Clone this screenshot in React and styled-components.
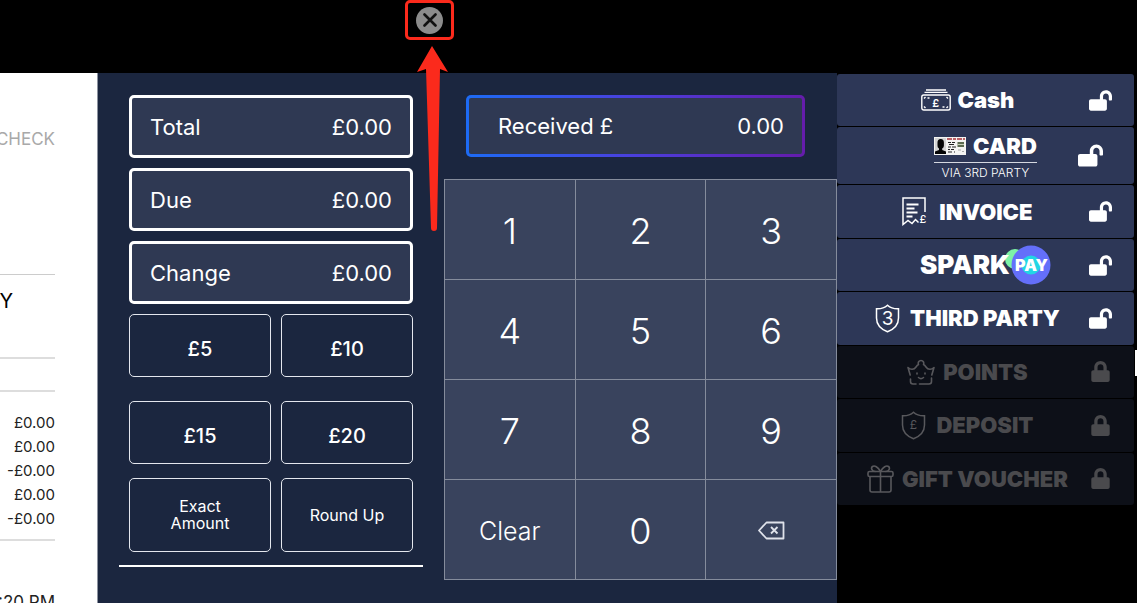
import React from "react";
import styled, { createGlobalStyle } from "styled-components";
import { FaLock, FaLockOpen } from "react-icons/fa";

const navy = "#1b263f";
const boxColor = "#2f3953";
const rowColor = "#2d3757";
const keyColor = "#39435d";
const red = "#fb2a1c";

const GlobalStyle = createGlobalStyle`
  * {
    box-sizing: border-box;
  }
  body {
    margin: 0;
    background: #000;
    font-family: "Inter", "Open Sans", sans-serif;
  }
  button, input {
    font: inherit;
    color: inherit;
  }
  button {
    cursor: pointer;
  }
`;

const totals = [
  { label: "Total", value: "£0.00" },
  { label: "Due", value: "£0.00" },
  { label: "Change", value: "£0.00" },
];

const receiptLines = ["£0.00", "£0.00", "-£0.00", "£0.00", "-£0.00"];

const digits = ["1", "2", "3", "4", "5", "6", "7", "8", "9"];

function CashIcon() {
  return (
    <svg width="30" height="22" viewBox="0 0 30 22" fill="none" stroke="#fff" strokeWidth="1.4">
      <path d="M5 1h20M3.5 3.4h23" />
      <rect x="0.8" y="6" width="28.4" height="15" rx="2" />
      <path d="M3 9.5l1.5-1.5M25.5 8l1.5 1.5M3 17.5l1.5 1.5M25.5 19l1.5-1.5M6.5 9h2M21.5 18h2" />
      <text x="14.8" y="18" textAnchor="middle" fontSize="11" fontWeight="600" fill="#fff" stroke="none">
        £
      </text>
    </svg>
  );
}

function CardIcon() {
  return (
    <svg width="32" height="18" viewBox="0 0 32 18">
      <rect width="32" height="18" fill="#f4f4f2" />
      <rect x="1" y="1" width="11" height="16" fill="#d4d4d4" />
      <path d="M3.5 5.5a3.2 3.5 0 0 1 6.4 0v3a3 3 0 0 1-1.700 3v1.500L12 14.500V17H1v-2.500l4-1.500v-1.500a3 3 0 0 1-1.500-3z" fill="#050505" />
      <path d="M13 2h18" stroke="#a8303a" strokeWidth="1.6" strokeDasharray="5 1 3 1" />
      <path d="M14 5.5h3M18 5.5h3M15 7.5h5M14 10h3M18 10h4M14 12.5h2M17 12.5h3M14 15h4M20 15h1" stroke="#222" strokeWidth="1.2" />
      <rect x="23.5" y="5" width="6.5" height="5" fill="#5c6b50" />
      <path d="M23.5 7.5h6.5" stroke="#c8d0b8" />
      <path d="M24 13h3M28 14.5h2" stroke="#aaa" />
    </svg>
  );
}

function InvoiceIcon() {
  return (
    <svg width="25" height="29" viewBox="0 0 25 29" fill="none" stroke="#fff" strokeWidth="1.5">
      <path d="M23 15V1H1v26.5l5-4 4 3 3.5-4 3 3" />
      <path d="M4.5 7.5h12M4.5 11.5h8M4.5 15.5h11M4.5 19.5h6" strokeWidth="1.8" />
      <text x="21" y="26" textAnchor="middle" fontSize="11" fontWeight="500" fill="#fff" stroke="none">
        £
      </text>
    </svg>
  );
}

function ShieldIcon({ mark, size, color }) {
  return (
    <svg width="25" height="29" viewBox="0 0 25 29" fill="none" stroke={color} strokeWidth="1.5">
      <path d="M12.5 1.2C9.5 4 5.5 5 1.5 4.8V14c0 6.5 4 11 11 13.8 7-2.8 11-7.3 11-13.8V4.8c-4 .2-8-.8-11-3.6z" />
      <text x="12.5" y={14 + size * 0.36} textAnchor="middle" fontSize={size} fill={color} stroke="none">
        {mark}
      </text>
    </svg>
  );
}

function CrownIcon() {
  return (
    <svg width="28" height="26" viewBox="0 0 28 26" fill="none" stroke="#58585c" strokeWidth="1.6" strokeLinecap="round" strokeLinejoin="round">
      <path d="M3.200 16L1 8.500c2.500 2.500 6 2.500 8-.5 1-1.500 1.500-2 2.500-2.500a2.800 2.800 0 1 1 5 0c1 .5 1.500 1 2.500 2.500 2 3 5.500 3 8 .5L24.800 16M3.500 20v2.500A2.500 2.500 0 0 0 6 25h3M12.500 25H22a2.500 2.500 0 0 0 2.500-2.500V19" />
      <path d="M10 14v1M18 14v1M11.500 18.500c1.500 1.300 3.500 1.300 5 0" />
    </svg>
  );
}

function GiftIcon() {
  return (
    <svg width="27" height="28" viewBox="0 0 27 28" fill="none" stroke="#58585c" strokeWidth="1.6" strokeLinejoin="round">
      <rect x="1" y="6.5" width="25" height="5" rx="1.5" />
      <path d="M3 11.5V25a2 2 0 0 0 2 2h17a2 2 0 0 0 2-2V11.5M13.5 6.5V27" />
      <path d="M13.5 6.5C11 2 7.5 0 5.500 1.500s-.5 5 3 5M13.500 6.500C16 2 19.500 0 21.500 1.500s.5 5-3 5" />
    </svg>
  );
}

function PayBadge() {
  return (
    <PaySvg width="46" height="40" viewBox="0 0 46 40">
      <circle cx="10" cy="14" r="10" fill="#7df3a8" />
      <circle cx="26" cy="20" r="19.5" fill="#646ffa" />
      <circle cx="26" cy="20" r="9.5" fill="#22d6e4" />
      <text x="26.5" y="25.500" textAnchor="middle" fontSize="16" fontWeight="900" fill="#fff">
        PAY
      </text>
    </PaySvg>
  );
}

function BackspaceIcon() {
  return (
    <svg width="27" height="19" viewBox="0 0 27 19" fill="none" stroke="#dfe2ea" strokeWidth="1.8" strokeLinejoin="round">
      <path d="M8.5 1.5h17v16h-17L1 9.5z" />
      <path d="M13 6l6.5 6.500M19.500 6L13 12.500" />
    </svg>
  );
}

function Method({ label, icon, gap, locked }) {
  return (
    <MethodButton type="button" disabled={locked}>
      <MethodLabel $gap={gap}>
        {icon}
        <MethodName>{label}</MethodName>
      </MethodLabel>
      <LockCell>{locked ? <FaLock size={21} /> : <FaLockOpen size={23} />}</LockCell>
    </MethodButton>
  );
}

function App() {
  return (
    <Page>
      <GlobalStyle />
      <TopBar>
        <Callout>
          <CloseButton type="button" aria-label="Close">
            <svg width="14" height="14" viewBox="0 0 14 14" stroke="#111" strokeWidth="2.6" strokeLinecap="round">
              <path d="M1.5 1.5l11 11M12.5 1.5l-11 11" />
            </svg>
          </CloseButton>
          <Arrow width="34" height="186" viewBox="0 0 34 186">
            <path d="M17 0l16 26-8-3-3 159a3 3 0 0 1-6 0L11 23l-9 3z" fill={red} />
          </Arrow>
        </Callout>
      </TopBar>
      <Main>
        <Receipt>
          <ReceiptHead>CHECK</ReceiptHead>
          <ReceiptTitle>Y</ReceiptTitle>
          <ReceiptBand />
          <ReceiptList>
            {receiptLines.map((line, i) => (
              <li key={i}>{line}</li>
            ))}
          </ReceiptList>
          <ReceiptTime>:20 PM</ReceiptTime>
        </Receipt>

        <AmountPanel>
          <Stack>
            {totals.map((t) => (
              <TotalBox key={t.label}>
                <span>{t.label}</span>
                <span>{t.value}</span>
              </TotalBox>
            ))}
          </Stack>
          <QuickGrid>
            <QuickButton type="button">£5</QuickButton>
            <QuickButton type="button">£10</QuickButton>
          </QuickGrid>
          <QuickGrid $top={24}>
            <QuickButton type="button">£15</QuickButton>
            <QuickButton type="button">£20</QuickButton>
          </QuickGrid>
          <QuickGrid $top={14}>
            <QuickButton type="button" $small>
              Exact
              <br />
              Amount
            </QuickButton>
            <QuickButton type="button" $small>
              Round Up
            </QuickButton>
          </QuickGrid>
          <Rule />
        </AmountPanel>

        <KeypadPanel>
          <Received>
            <label htmlFor="received">Received £</label>
            <ReceivedInput id="received" type="text" defaultValue="0.00" />
          </Received>
          <Keypad>
            {digits.map((d) => (
              <Key type="button" key={d}>
                {d}
              </Key>
            ))}
            <Key type="button" $small>
              Clear
            </Key>
            <Key type="button">0</Key>
            <Key type="button" aria-label="Backspace">
              <BackspaceIcon />
            </Key>
          </Keypad>
        </KeypadPanel>

        <Methods>
          <Method label="Cash" icon={<CashIcon />} gap={7} />
          <MethodButton type="button" $side={86}>
            <CardLabel>
              <CardTop>
                <CardIcon />
                <MethodName>CARD</MethodName>
              </CardTop>
              <CardNote>VIA 3RD PARTY</CardNote>
            </CardLabel>
            <LockCell $side={86}>
              <FaLockOpen size={25} />
            </LockCell>
          </MethodButton>
          <Method label="INVOICE" icon={<InvoiceIcon />} gap={12} />
          <MethodButton type="button" $side={66}>
            <SparkLabel>
              <SparkName>SPARK</SparkName>
              <PayBadge />
            </SparkLabel>
            <LockCell>
              <FaLockOpen size={23} />
            </LockCell>
          </MethodButton>
          <Method label="THIRD PARTY" icon={<ShieldIcon mark="3" size={19} color="#fff" />} gap={10} />
          <Method label="POINTS" icon={<CrownIcon />} gap={8} locked />
          <Method label="DEPOSIT" icon={<ShieldIcon mark="£" size={12} color="#58585c" />} gap={10} locked />
          <Method label="GIFT VOUCHER" icon={<GiftIcon />} gap={8} locked />
        </Methods>
      </Main>
      <ScrollMark />
    </Page>
  );
}

const Page = styled.div`
  position: relative;
  display: flex;
  flex-direction: column;
  height: 100vh;
  overflow: hidden;
  background: #000;
`;

const TopBar = styled.header`
  display: flex;
  flex: none;
  height: 73px;
  padding-left: 405px;
`;

const Callout = styled.div`
  position: relative;
  display: flex;
  align-items: center;
  justify-content: center;
  width: 49px;
  height: 40px;
  border: 3px solid ${red};
  border-radius: 5px;
`;

const CloseButton = styled.button`
  display: flex;
  align-items: center;
  justify-content: center;
  width: 27px;
  height: 27px;
  padding: 0;
  border: none;
  border-radius: 50%;
  background: #8c8c8c;
`;

const Arrow = styled.svg`
  position: absolute;
  top: 43px;
  left: 7px;
  z-index: 2;
  pointer-events: none;
`;

const Main = styled.main`
  display: grid;
  grid-template-columns: 98px minmax(0, 346fr) minmax(0, 393fr) minmax(0, 300fr);
  flex: 1;
  min-height: 0;
`;

const Receipt = styled.section`
  display: flex;
  flex-direction: column;
  overflow: hidden;
  padding-right: 42px;
  border-right: 1px solid #8d93a0;
  background: #fff;
  color: #222;
  white-space: nowrap;
`;

const ReceiptHead = styled.div`
  display: flex;
  flex: none;
  justify-content: flex-end;
  height: 202px;
  padding-top: 56px;
  border-bottom: 1px solid #ccc;
  color: #a9a9a9;
  font-size: 17px;
  line-height: 20px;
`;

const ReceiptTitle = styled.div`
  display: flex;
  flex: none;
  justify-content: flex-end;
  height: 84px;
  padding: 14px 42px 0 0;
  border-bottom: 2px solid #ddd;
  color: #000;
  font-size: 20px;
  line-height: 24px;
`;

const ReceiptBand = styled.div`
  flex: none;
  height: 33px;
  border-bottom: 2px solid #ddd;
`;

const ReceiptList = styled.ul`
  flex: none;
  height: 149px;
  margin: 0;
  padding: 19px 0 0;
  border-bottom: 2px solid #ddd;
  list-style: none;
  text-align: right;
  font-size: 15px;
  line-height: 24px;
`;

const ReceiptTime = styled.div`
  display: flex;
  flex: none;
  justify-content: flex-end;
  padding-top: 51px;
  font-size: 17px;
  line-height: 20px;
`;

const AmountPanel = styled.section`
  display: flex;
  flex-direction: column;
  padding: 22px 31px 0;
  background: ${navy};
  color: #fff;
`;

const Stack = styled.div`
  display: flex;
  flex-direction: column;
  gap: 10px;
`;

const TotalBox = styled.div`
  display: flex;
  align-items: center;
  justify-content: space-between;
  height: 63px;
  padding: 0 18px;
  border: 3px solid #fff;
  border-radius: 5px;
  background: ${boxColor};
  font-size: 22px;
`;

const QuickGrid = styled.div`
  display: grid;
  grid-template-columns: 142fr 132fr;
  gap: 10px;
  margin-top: ${(p) => p.$top || 10}px;
`;

const QuickButton = styled.button`
  height: ${(p) => (p.$small ? 74 : 63)}px;
  padding: ${(p) => (p.$small ? 0 : 6)}px 0 0;
  border: 1px solid #e4e7ee;
  border-radius: 5px;
  background: transparent;
  font-size: ${(p) => (p.$small ? 16 : 20)}px;
  font-weight: ${(p) => (p.$small ? 400 : 500)};
  line-height: ${(p) => (p.$small ? 17 : 24)}px;
`;

const Rule = styled.hr`
  height: 2px;
  margin: 13px -10px 0;
  border: none;
  background: #fff;
`;

const KeypadPanel = styled.section`
  display: flex;
  flex-direction: column;
  padding-top: 22px;
  background: ${navy};
  color: #fff;
`;

const Received = styled.div`
  display: flex;
  align-items: center;
  justify-content: space-between;
  height: 62px;
  margin: 0 32px 22px 22px;
  padding: 0 18px 0 29px;
  border: 3px solid transparent;
  border-radius: 5px;
  background: linear-gradient(${boxColor}, ${boxColor}) padding-box,
    linear-gradient(90deg, #1d6bf5, #4b3fdc 50%, #651cab) border-box;
  font-size: 22px;
`;

const ReceivedInput = styled.input`
  width: 120px;
  padding: 0;
  border: none;
  outline: none;
  background: transparent;
  text-align: right;
`;

const Keypad = styled.div`
  display: grid;
  grid-template-columns: repeat(3, 1fr);
  grid-auto-rows: 99px;
  gap: 1px;
  padding: 1px;
  background: #858c9c;
`;

const Key = styled.button`
  display: flex;
  align-items: center;
  justify-content: center;
  padding: 2px 0 0;
  border: none;
  background: ${keyColor};
  font-size: ${(p) => (p.$small ? 25 : 36)}px;
  font-weight: 300;
`;

const Methods = styled.nav`
  display: grid;
  grid-template-rows: 1fr 57px repeat(6, 1fr);
  gap: 1px;
  align-self: start;
  height: 432px;
  padding: 1px 4px 0 0;
`;

const MethodButton = styled.button`
  display: flex;
  align-items: center;
  min-height: 0;
  padding: 0 0 0 ${(p) => p.$side || 30}px;
  border: none;
  border-radius: 3px;
  background: ${rowColor};
  color: #fff;

  &:disabled {
    background: #0d1018;
    color: #4a4a4d;
    cursor: default;
  }
`;

const MethodLabel = styled.span`
  display: flex;
  flex: 1;
  align-items: center;
  justify-content: center;
  gap: ${(p) => p.$gap}px;
  min-width: 0;
`;

const MethodName = styled.span`
  font-size: 22px;
  font-weight: 900;
  line-height: 24px;
  white-space: nowrap;
`;

const LockCell = styled.span`
  display: flex;
  flex: none;
  justify-content: center;
  width: ${(p) => p.$side || 66}px;
`;

const CardLabel = styled.span`
  display: flex;
  flex: 1;
  flex-direction: column;
  align-items: center;
  padding-top: 3px;
`;

const CardTop = styled.span`
  display: flex;
  align-items: center;
  gap: 7px;
  padding-bottom: 4px;
  border-bottom: 1px solid #d5d8e0;
`;

const CardNote = styled.span`
  padding-top: 2px;
  font-size: 12px;
  font-weight: 300;
  line-height: 16px;
  white-space: nowrap;
`;

const SparkLabel = styled.span`
  display: flex;
  flex: 1;
  align-items: center;
  justify-content: center;
`;

const SparkName = styled.span`
  z-index: 1;
  font-size: 26px;
  font-weight: 900;
  line-height: 30px;
`;

const PaySvg = styled.svg`
  flex: none;
  margin-left: -5px;
`;

const ScrollMark = styled.div`
  position: absolute;
  top: 350px;
  right: 0;
  width: 2px;
  height: 26px;
  background: #fff;
`;

export default App;
